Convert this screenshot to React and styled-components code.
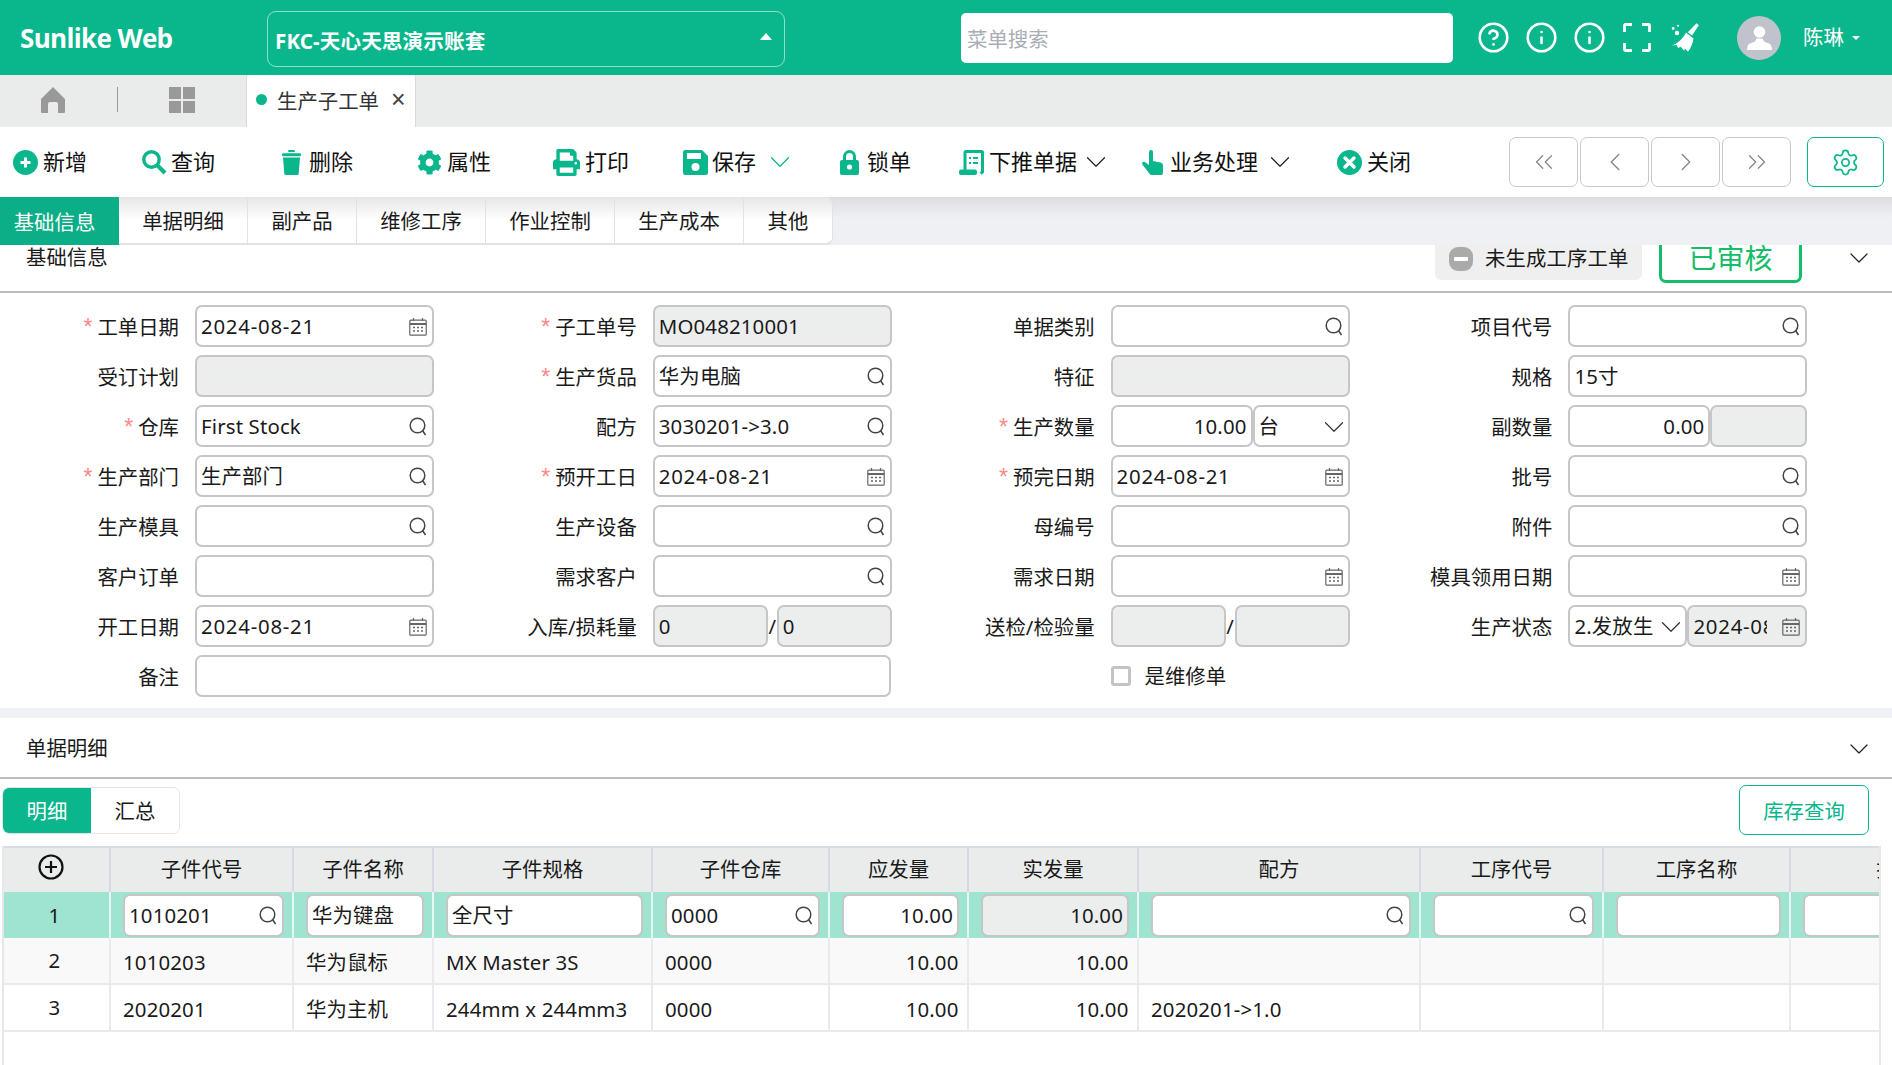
import React from "react";
import styled, { createGlobalStyle } from "styled-components";
import { ChevronDown, ChevronLeft, ChevronRight, ChevronsLeft, ChevronsRight, CircleHelp, Info, Settings } from "lucide-react";
import { FaCog, FaPrint } from "react-icons/fa";

const GREEN = "#0ab68b";
const Global = createGlobalStyle`
  html, body { margin: 0; height: 100%; background: #fff; overflow: hidden; }
  body, button { font-family: "Noto Sans", "Noto Sans CJK SC", sans-serif; font-size: 20.4px; color: #1a1a1a; }
  * { box-sizing: border-box; }
`;

const Page = styled.div`width: 1892px; height: 1065px; overflow: hidden; display: flex; flex-direction: column;`;

/* ---------- top bar ---------- */
const TopBar = styled.header`height: 75px; flex: none; background: ${GREEN}; display: flex; align-items: center; padding-left: 20px; color: #fff;`;
const Logo = styled.div`width: 247px; font-size: 26px; font-weight: 700; line-height: 1; font-family: "Open Sans", sans-serif; letter-spacing: -0.65px;`;
const OrgSelect = styled.div`width: 518px; height: 56px; margin-top: 2px; border: 1px solid rgba(255,255,255,.55); border-radius: 9px; display: flex; align-items: center; justify-content: space-between; padding: 2px 12px 0 7px; font-size: 20.6px; font-weight: 700; letter-spacing: .1px;`;
const UpCaret = styled.i`width: 0; height: 0; border: 6px solid transparent; border-top: 0; border-bottom: 7px solid #fff; margin-top: -6px;`;
const MenuSearch = styled.div`width: 492px; height: 50px; margin-left: 176px; background: #fff; border-radius: 5px; color: #a9adb5; display: flex; align-items: center; padding-left: 6px;`;
const TopIcons = styled.div`display: flex; gap: 20px; margin-left: 26px; align-items: center;`;
const Avatar = styled.div`width: 44px; height: 44px; border-radius: 50%; background: #c0c3cc; margin-left: 38px; display: flex; align-items: center; justify-content: center;`;
const UserName = styled.div`margin-left: 22px; color: #fff; display: flex; align-items: center; gap: 8px; line-height: 1;`;
const DownCaret = styled.i`width: 0; height: 0; border: 4px solid transparent; border-bottom: 0; border-top: 4px solid #fff;`;

/* ---------- tab bar ---------- */
const TabBar = styled.nav`height: 52px; flex: none; background: #e9eceb; display: flex; align-items: center;`;
const HomeCell = styled.div`width: 118px; height: 25px; margin-top: -3px; border-right: 1px solid #999; display: flex; align-items: center; padding-left: 41px;`;
const GridCell = styled.div`width: 128px; margin-top: -3px; display: flex; align-items: center; padding-left: 51px;`;
const OpenTab = styled.div`width: 170px; height: 52px; background: #fff; border: solid #d9dbdb; border-width: 0 1px; border-radius: 3px 3px 0 0; display: flex; align-items: center; padding: 0 0 3px 9px; color: #333;`;
const TabDot = styled.i`width: 11px; height: 11px; background: ${GREEN}; border-radius: 50%; margin-right: 10px;`;
const TabClose = styled.span`margin-left: 12px; font-size: 25px; line-height: 1; color: #444; font-family: "Liberation Sans", sans-serif;`;

/* ---------- toolbar ---------- */
const ToolBar = styled.div`height: 70px; flex: none; background: #fff; display: flex; align-items: center; padding: 0 8px 0 13px;`;
const ToolButton = styled.div`width: ${p => p.$w}px; display: flex; align-items: center; font-size: 22px; line-height: 1; color: #111; gap: ${p => p.$gap || 5}px; svg { flex: none; }`;
const ToolLabel = styled.span`margin-top: -2px;`;
const ToolChevron = styled.span`display: flex; margin-left: ${p => p.$gap}px; color: ${p => p.$color};`;
const Pager = styled.div`margin-left: auto; display: flex; gap: 2px; align-items: center;`;
const PageBtn = styled.div`width: 69px; height: 50px; border: 1px solid #c9c9c9; border-radius: 7px; display: flex; align-items: center; justify-content: center; color: #888;`;
const GearBtn = styled(PageBtn)`width: 77px; margin-left: 14px; border-color: ${GREEN}; color: ${GREEN};`;

/* ---------- sub tabs ---------- */
const SubTabs = styled.div`height: 48px; flex: none; position: relative; z-index: 2; display: flex; background: linear-gradient(#dcdee2, #eff0f4 45%);`;
const SubTab = styled.div`width: ${p => p.$w}px; display: flex; align-items: center; justify-content: center; line-height: 1; padding: 3px ${p => p.$on ? 10 : 0}px 0 0; color: ${p => p.$on ? "#fff" : "#1a1a1a"};
  background: ${p => p.$on ? "#0cae87" : "linear-gradient(#e6e6e6, #fff 50%)"};
  border-right: ${p => p.$on ? "0" : "1px solid #e0e2e6"}; border-bottom: ${p => p.$on ? "0" : "2px solid #e0e2e8"}; border-radius: ${p => p.$last ? "0 7px 7px 0" : "0"};`;

/* ---------- sections ---------- */
const SectionHead = styled.div`height: ${p => p.$h}px; flex: none; background: #fff; border-bottom: 2px solid #bdbdbd; display: flex; align-items: ${p => p.$top ? "flex-start" : "center"}; padding: ${p => p.$top ? 0 : 2}px 26px 0; line-height: 1; margin-top: ${p => p.$mt || 0}px;`;
const HeadTitle = styled.div`margin-top: ${p => p.$mt || 0}px;`;
const HeadRight = styled.div`margin-left: auto; display: flex; align-items: flex-start;`;
const NoticeBadge = styled.div`width: 207px; height: 53px; background: #efefef; border-radius: 0 0 6px 6px; padding-top: 10px; display: flex; align-items: center; padding-left: 14px; gap: 12px; letter-spacing: .1px;`;
const AuditStamp = styled.div`width: 143px; height: 56px; margin-left: 17px; border: 3px solid #14bd67; border-radius: 0 0 7px 7px; color: #14bd67; font-size: 28px; line-height: 1; display: flex; align-items: center; justify-content: center; padding-top: 6px;`;
const HeadChevron = styled.span`display: flex; margin-left: 41px; margin-right: -9px; margin-top: ${p => p.$mt || 0}px; color: #222;`;
const Gap = styled.div`height: 10px; flex: none; background: #f0f1f5;`;

/* ---------- form ---------- */
const Form = styled.div`display: grid; grid-template-columns: repeat(4, 457.8px); row-gap: 8px; padding: 12px 0 11px 15px; flex: none;`;
const Field = styled.div`display: flex; align-items: center; gap: 16px; height: 42px; grid-column: span ${p => p.$span || 1};`;
const Label = styled.div`width: 164px; flex: none; text-align: right; line-height: 1; margin-top: 3px; white-space: nowrap;
  &::before { content: ${p => p.$req ? '"*"' : "none"}; color: #f88; margin-right: 5px; font-family: "Liberation Sans", sans-serif; font-size: 23px; }`;
const Control = styled.div`width: ${p => p.$wide ? "696px" : "239px"}; height: 42px; display: flex; align-items: center;`;
const Box = styled.div`flex: ${p => p.$w ? `none` : "1"}; width: ${p => p.$w ? p.$w + "px" : "auto"}; min-width: 0; height: ${p => p.$h || 42}px; display: flex; align-items: center; gap: 6px;
  justify-content: ${p => p.$right ? "flex-end" : "space-between"}; padding: 1px ${p => p.$right ? 4 : 5}px 0 4px; border: 2px solid #c6c6c6; border-radius: 7px; background: ${p => p.$off ? "#eceeed" : "#fff"}; color: #1a1a1a; svg { flex: none; }`;
const BoxText = styled.span`white-space: nowrap; overflow: hidden; line-height: 1.4; max-width: ${p => p.$max ? p.$max + "px" : "none"}; letter-spacing: ${p => p.$date ? ".75px" : ".15px"};`;
const SelChevron = styled.span`display: flex; margin: 0 -8px 0 -12px; color: #333;`;
const Slash = styled.span`width: 9px; flex: none; text-align: center; line-height: 1;`;
const CheckField = styled.div`display: flex; align-items: center; gap: 14px; margin-left: 180px; height: 42px; line-height: 1;`;
const CheckBox = styled.i`width: 20px; height: 20px; border: 3px solid #c4c4c4; border-radius: 3px; display: block;`;

/* ---------- detail ---------- */
const DetailBar = styled.div`height: 67px; flex: none; display: flex; align-items: center; justify-content: space-between; padding: 0 23px 5px 2px;`;
const Segments = styled.div`display: flex; height: 47px; border: 1px solid #e4e5ea; border-radius: 7px; overflow: hidden;`;
const Segment = styled.div`width: 88px; display: flex; align-items: center; justify-content: center; line-height: 1; padding-top: 2px; background: ${p => p.$on ? GREEN : "#fff"}; color: ${p => p.$on ? "#fff" : "#1a1a1a"};`;
const StockBtn = styled.div`width: 130px; height: 50px; border: 1px solid ${GREEN}; border-radius: 7px; color: ${GREEN}; display: flex; align-items: center; justify-content: center; line-height: 1; padding-top: 2px;`;
const TableWrap = styled.div`width: 1879px; margin-left: 2px; flex: 1; overflow: hidden; border: solid #e8e8ec; border-width: 0 2px;`;
const Table = styled.table`border-collapse: separate; border-spacing: 0; table-layout: fixed; width: 2041px;`;
const Th = styled.th`height: 46px; padding: 0 0 2px; font-weight: 400; line-height: 1; text-align: center; background: #e9eceb; border-top: 2px solid #d9dbe5; border-right: 2px solid #d6d8e4; white-space: nowrap; overflow: hidden; color: #1a1a1a;`;
const AddRow = styled.span`display: inline-flex; margin: -6px 0 0 -12px; vertical-align: middle;`;
const Td = styled.td`height: ${p => p.$first ? 46 : 47}px; padding: ${p => p.$index ? "0 4px 0 0" : p.$first ? "0 8px 0 12px" : "4px 8.5px 0 12px"}; line-height: 1; background: ${p => p.$bg}; border-right: 2px solid ${p => p.$first ? "#e8f7f2" : "#e9eaed"}; border-bottom: ${p => p.$first ? "0" : "2px solid #e9eaed"}; text-align: ${p => p.$align || "left"}; white-space: nowrap; letter-spacing: .15px;`;

/* ---------- icons ---------- */
const SearchGlyph = () => (<svg width="18" height="19" viewBox="0 0 18 19" fill="none" stroke="#444" strokeWidth="1.5"><circle cx="8.5" cy="8.5" r="7.3"/><path d="M13.5 13.5l3 4.5"/></svg>);
const CalendarGlyph = () => (<svg width="18" height="18" viewBox="0 0 18 18" fill="none" stroke="#666" strokeWidth="1.2"><rect x=".8" y="2.2" width="16.4" height="15" rx="1"/><path d="M.8 6h16.4" strokeWidth="2"/><path d="M4.5 0v3M13.5 0v3"/><path d="M4 9.5h2M8 9.5h2M12 9.5h2M4 13h2M8 13h2M12 13h2" strokeWidth="1.5"/></svg>);
const IconPlus = () => (<svg width="25" height="25" viewBox="0 0 25 25"><circle cx="12.5" cy="12.5" r="12.5" fill={GREEN}/><path d="M12.5 7.5v10M7.5 12.5h10" stroke="#fff" strokeWidth="3"/></svg>);
const IconSearch = () => (<svg width="25" height="25" viewBox="0 0 25 25" fill="none" stroke={GREEN}><circle cx="9.5" cy="9.5" r="7.7" strokeWidth="3.4"/><path d="M15 15l8 8" strokeWidth="4"/></svg>);
const IconTrash = () => (<svg width="19" height="25" viewBox="0 0 19 25" fill={GREEN}><rect x="6" width="7" height="2" rx="1"/><rect y="3.2" width="19" height="3" rx="1.2"/><path d="M1 7.5h17l-1.3 16a1.5 1.5 0 0 1-1.5 1.5H3.800a1.5 1.5 0 0 1-1.5-1.5z"/></svg>);
const IconSave = () => (<svg width="25" height="25" viewBox="0 0 25 25"><path d="M2.5 0H19l6 6v16.5a2.5 2.5 0 0 1-2.5 2.5h-20A2.5 2.5 0 0 1 0 22.5v-20A2.5 2.5 0 0 1 2.5 0z" fill={GREEN}/><rect x="4" y="3" width="14" height="6" fill="#fff"/><circle cx="12.5" cy="17" r="4" fill="#fff"/></svg>);
const IconLock = () => (<svg width="19" height="25" viewBox="0 0 19 25"><path d="M4.500 11V6.500a5 5 0 0 1 10 0V11" fill="none" stroke={GREEN} strokeWidth="3"/><rect y="10" width="19" height="15" rx="2" fill={GREEN}/><circle cx="9.5" cy="17" r="2.6" fill="#fff"/></svg>);
const IconDoc = () => (<svg width="25" height="25" viewBox="0 0 25 25"><path d="M6 20V2.500A1 1 0 0 1 7 1.500h15.500a1 1 0 0 1 1 1V22l-2 1.500" fill="none" stroke={GREEN} strokeWidth="3"/><rect x="0" y="19.5" width="18" height="5.5" rx="2" fill={GREEN}/><path d="M10 8h2M10 13h2M14 8h5M14 13h5" stroke={GREEN} strokeWidth="2.2"/></svg>);
const IconHand = () => (<svg width="21" height="25" viewBox="0 0 21 25" fill={GREEN}><path d="M7 2a2 2 0 0 1 4 0v9l7.500 1.500a3 3 0 0 1 2.500 3V23a2 2 0 0 1-2 2H9.500a2 2 0 0 1-1.600-.8L.4 14.500c-1-1.500.6-3.500 2.400-2.400L7 15z"/></svg>);
const IconClose = () => (<svg width="25" height="25" viewBox="0 0 25 25"><circle cx="12.5" cy="12.5" r="12.5" fill={GREEN}/><path d="M8 8l9 9M17 8l-9 9" stroke="#fff" strokeWidth="3.4" strokeLinecap="round"/></svg>);
const IconFull = () => (<svg width="28" height="29" viewBox="0 0 28 29" fill="none" stroke="#fff" strokeWidth="2.8"><path d="M9 1.500H2.500a1 1 0 0 0-1 1V9M19 1.500h6.500a1 1 0 0 1 1 1V9M9 27.500H2.500a1 1 0 0 1-1-1V20M19 27.500h6.500a1 1 0 0 0 1-1V20"/></svg>);
const IconBroom = () => (<svg width="28" height="29" viewBox="0 0 28 29" fill="#fff"><path d="M25.500.3l2.300 1.900-6.800 10.400-4.200-3.400z"/><path d="M15 9.500l7.500 6c-.5 4.500-2.800 9.800-5.500 13.300l-3-3.300-.8 2.300-3.500-4-2.500 1.300-1.700-3.100-5 .4C6.500 21 12 15.500 15 9.500z"/><circle cx="2.2" cy="5.500" r="1.4"/><circle cx="7" cy="2.8" r="1"/><circle cx="6" cy="10" r="2.2"/></svg>);
const IconUser = () => (<svg width="25" height="24" viewBox="0 0 25 24" fill="#fff"><circle cx="12.5" cy="6" r="5.8"/><path d="M9.500 12.500h6l1.500 3 6 2.500c1 .5 2 4 2 6H0c0-2 1-5.500 2-6l6-2.500z"/></svg>);
const IconHome = () => (<svg width="24" height="26" viewBox="0 0 24 26" fill="#999"><path d="M12 0l12 12v13a1 1 0 0 1-1 1h-6v-9a2 2 0 0 0-2-2H9a2 2 0 0 0-2 2v9H1a1 1 0 0 1-1-1V12z"/></svg>);
const IconGrid = () => (<svg width="26" height="26" viewBox="0 0 26 26" fill="#999"><rect width="12" height="12"/><rect x="14" width="12" height="12"/><rect y="14" width="12" height="12"/><rect x="14" y="14" width="12" height="12"/></svg>);
const IconMinus = () => (<svg width="24" height="24" viewBox="0 0 24 24"><rect width="24" height="24" rx="9" fill="#aaa"/><rect x="5" y="10" width="14" height="4" rx="1" fill="#fff"/></svg>);
const IconAddRow = () => (<svg width="26" height="26" viewBox="0 0 26 26" fill="none" stroke="#111" strokeWidth="2.2"><circle cx="13" cy="13" r="11.5"/><path d="M13 7v12M7 13h12"/></svg>);

const Sel = ({ text, w }) => (<Box $w={w}><BoxText>{text}</BoxText><SelChevron><ChevronDown size={34} strokeWidth={.85} /></SelChevron></Box>);
const Input = ({ text = "", icon, off, right, w, h, max }) => (
  <Box $off={off} $right={right} $w={w} $h={h}>
    <BoxText $date={/^2024/.test(text)} $max={max}>{text}</BoxText>
    {icon === "s" && <SearchGlyph />}
    {icon === "d" && <CalendarGlyph />}
  </Box>
);
const F = ({ label, req, children, span }) => (
  <Field $span={span}>
    <Label $req={req}>{label}</Label>
    <Control $wide={span === 2}>{children}</Control>
  </Field>
);

const tools = [
  { w: 129, icon: <IconPlus />, t: "新增" },
  { w: 140, icon: <IconSearch />, t: "查询", gap: 4 },
  { w: 135, icon: <IconTrash />, t: "删除", gap: 8 },
  { w: 136, icon: <FaCog size={25} color={GREEN} />, t: "属性" },
  { w: 130, icon: <FaPrint size={27} color={GREEN} />, t: "打印" },
  { w: 157, icon: <IconSave />, t: "保存", gap: 4, ch: 2.5, cc: GREEN },
  { w: 119, icon: <IconLock />, t: "锁单", gap: 8 },
  { w: 183, icon: <IconDoc />, t: "下推单据", ch: -3.5, cc: "#222" },
  { w: 195, icon: <IconHand />, t: "业务处理", gap: 7, ch: -2.5, cc: "#222" },
  { w: 90, icon: <IconClose />, t: "关闭" },
];
const subTabs = [["基础信息", 119], ["单据明细", 129], ["副产品", 109], ["维修工序", 129], ["作业控制", 129], ["生产成本", 129], ["其他", 89]];
const columns = [["", 107], ["子件代号", 183], ["子件名称", 140], ["子件规格", 219], ["子件仓库", 177], ["应发量", 139], ["实发量", 170], ["配方", 282], ["工序代号", 183], ["工序名称", 187], ["投料日期", 254]];
const rows = [
  ["2", "1010203", "华为鼠标", "MX Master 3S", "0000", "10.00", "10.00", "", "", "", ""],
  ["3", "2020201", "华为主机", "244mm x 244mm3", "0000", "10.00", "10.00", "2020201->1.0", "", "", ""],
];
const firstRow = [
  { t: "1010201", i: "s" }, { t: "华为键盘" }, { t: "全尺寸" }, { t: "0000", i: "s" },
  { t: "10.00", r: 1 }, { t: "10.00", r: 1, off: 1 }, { i: "s" }, { i: "s" }, {}, {},
];

export default function App() {
  return (
    <Page>
      <Global />
      <TopBar>
        <Logo>Sunlike Web</Logo>
        <OrgSelect><span>FKC-天心天思演示账套</span><UpCaret /></OrgSelect>
        <MenuSearch>菜单搜索</MenuSearch>
        <TopIcons>
          <CircleHelp size={33} strokeWidth={1.9} color="#fff" style={{ margin: "-2.5px" }} />
          <Info size={33} strokeWidth={1.9} color="#fff" style={{ margin: "-2.5px" }} />
          <Info size={33} strokeWidth={1.9} color="#fff" style={{ margin: "-2.5px" }} />
          <IconFull />
          <IconBroom />
        </TopIcons>
        <Avatar><IconUser /></Avatar>
        <UserName>陈琳<DownCaret /></UserName>
      </TopBar>

      <TabBar>
        <HomeCell><IconHome /></HomeCell>
        <GridCell><IconGrid /></GridCell>
        <OpenTab><TabDot />生产子工单<TabClose>×</TabClose></OpenTab>
      </TabBar>

      <ToolBar>
        {tools.map(b => (
          <ToolButton key={b.t} $w={b.w} $gap={b.gap}>
            {b.icon}<ToolLabel>{b.t}</ToolLabel>
            {b.ch !== undefined && <ToolChevron $gap={b.ch} $color={b.cc}><ChevronDown size={34} strokeWidth={.85} /></ToolChevron>}
          </ToolButton>
        ))}
        <Pager>
          <PageBtn><ChevronsLeft size={30} strokeWidth={1} /></PageBtn>
          <PageBtn><ChevronLeft size={30} strokeWidth={1.1} /></PageBtn>
          <PageBtn><ChevronRight size={30} strokeWidth={1.1} /></PageBtn>
          <PageBtn><ChevronsRight size={30} strokeWidth={1} /></PageBtn>
          <GearBtn><Settings size={29} strokeWidth={1.4} /></GearBtn>
        </Pager>
      </ToolBar>

      <SubTabs>
        {subTabs.map(([t, w], i) => <SubTab key={t} $w={w} $on={i === 0} $last={i === subTabs.length - 1}>{t}</SubTab>)}
      </SubTabs>

      <SectionHead $h={66} $mt={-18} $top>
        <HeadTitle $mt={20}>基础信息</HeadTitle>
        <HeadRight>
          <NoticeBadge><IconMinus />未生成工序工单</NoticeBadge>
          <AuditStamp>已审核</AuditStamp>
          <HeadChevron $mt={15}><ChevronDown size={32} strokeWidth={.9} /></HeadChevron>
        </HeadRight>
      </SectionHead>

      <Form>
        <F label="工单日期" req><Input text="2024-08-21" icon="d" /></F>
        <F label="子工单号" req><Input text="MO048210001" off /></F>
        <F label="单据类别"><Input icon="s" /></F>
        <F label="项目代号"><Input icon="s" /></F>

        <F label="受订计划"><Input off /></F>
        <F label="生产货品" req><Input text="华为电脑" icon="s" /></F>
        <F label="特征"><Input off /></F>
        <F label="规格"><Input text="15寸" /></F>

        <F label="仓库" req><Input text="First Stock" icon="s" /></F>
        <F label="配方"><Input text="3030201->3.0" icon="s" /></F>
        <F label="生产数量" req><Input text="10.00" right w={142} /><Sel text="台" w={97} /></F>
        <F label="副数量"><Input text="0.00" right w={142} /><Input off /></F>

        <F label="生产部门" req><Input text="生产部门" icon="s" /></F>
        <F label="预开工日" req><Input text="2024-08-21" icon="d" /></F>
        <F label="预完日期" req><Input text="2024-08-21" icon="d" /></F>
        <F label="批号"><Input icon="s" /></F>

        <F label="生产模具"><Input icon="s" /></F>
        <F label="生产设备"><Input icon="s" /></F>
        <F label="母编号"><Input /></F>
        <F label="附件"><Input icon="s" /></F>

        <F label="客户订单"><Input /></F>
        <F label="需求客户"><Input icon="s" /></F>
        <F label="需求日期"><Input icon="d" /></F>
        <F label="模具领用日期"><Input icon="d" /></F>

        <F label="开工日期"><Input text="2024-08-21" icon="d" /></F>
        <F label="入库/损耗量"><Input text="0" off /><Slash>/</Slash><Input text="0" off /></F>
        <F label="送检/检验量"><Input off /><Slash>/</Slash><Input off /></F>
        <F label="生产状态"><Sel text="2.发放生" w={119} /><Input text="2024-08-21" icon="d" off max={74} /></F>

        <F label="备注" span={2}><Input /></F>
        <CheckField><CheckBox />是维修单</CheckField>
      </Form>

      <Gap />

      <SectionHead $h={61}>
        <HeadTitle>单据明细</HeadTitle>
        <HeadRight><HeadChevron><ChevronDown size={32} strokeWidth={.9} /></HeadChevron></HeadRight>
      </SectionHead>

      <DetailBar>
        <Segments><Segment $on>明细</Segment><Segment>汇总</Segment></Segments>
        <StockBtn>库存查询</StockBtn>
      </DetailBar>

      <TableWrap>
        <Table>
          <colgroup>{columns.map(([t, w], i) => <col key={i} style={{ width: w }} />)}</colgroup>
          <thead>
            <tr>{columns.map(([t], i) => <Th key={i}>{i === 0 ? <AddRow><IconAddRow /></AddRow> : t}</Th>)}</tr>
          </thead>
          <tbody>
            <tr>
              <Td $first $index $bg="#9ee4d0" $align="center">1</Td>
              {firstRow.map((c, i) => (
                <Td key={i} $first $bg="#9ee4d0">
                  <Input text={c.t || ""} icon={c.i} right={c.r} off={c.off} h={43} />
                </Td>
              ))}
            </tr>
            {rows.map((r, ri) => (
              <tr key={ri}>
                {r.map((c, i) => (
                  <Td key={i} $index={i === 0} $bg={ri === 0 ? "#f9f9f9" : "#fff"} $align={i === 0 ? "center" : (i === 5 || i === 6 ? "right" : "left")}>{c}</Td>
                ))}
              </tr>
            ))}
          </tbody>
        </Table>
      </TableWrap>
    </Page>
  );
}
